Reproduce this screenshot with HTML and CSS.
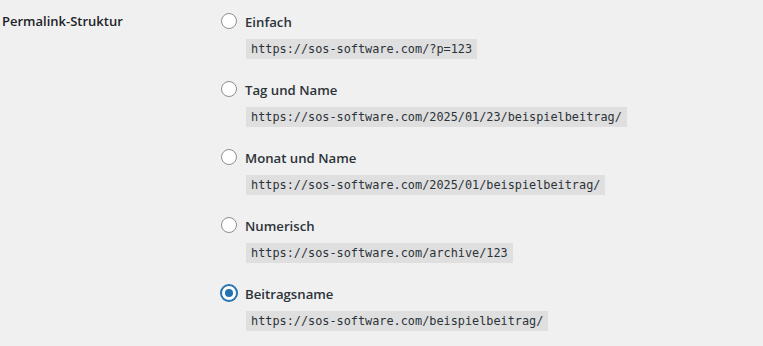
FILE: index.html
```html
<!DOCTYPE html>
<html lang="de">
  <head>
    <meta charset="utf-8" />
    <title>Permalink-Einstellungen</title>
    <link rel="stylesheet" href="styles.css">
  </head>

  <body>
    <main class="form-row">
      <div class="row-label">Permalink-Struktur</div>
      <fieldset class="options">
        <div class="option">
          <label class="choice">
            <input type="radio" name="selection" value="" />
            <span>Einfach</span>
          </label>
          <code>https://sos-software.com/?p=123</code>
        </div>
        <div class="option">
          <label class="choice">
            <input type="radio" name="selection" value="day" />
            <span>Tag und Name</span>
          </label>
          <code>https://sos-software.com/2025/01/23/beispielbeitrag/</code>
        </div>
        <div class="option">
          <label class="choice">
            <input type="radio" name="selection" value="month" />
            <span>Monat und Name</span>
          </label>
          <code>https://sos-software.com/2025/01/beispielbeitrag/</code>
        </div>
        <div class="option">
          <label class="choice">
            <input type="radio" name="selection" value="numeric" />
            <span>Numerisch</span>
          </label>
          <code>https://sos-software.com/archive/123</code>
        </div>
        <div class="option">
          <label class="choice">
            <input type="radio" name="selection" value="post" checked />
            <span>Beitragsname</span>
          </label>
          <code>https://sos-software.com/beispielbeitrag/</code>
        </div>
      </fieldset>
    </main>
  </body>
</html>
```

FILE: styles.css
```css
html,
body {
  margin: 0;
  background: #f0f0f1;
  color: #1d2327;
  font-family: 'Open Sans', 'Noto Sans', arial, sans-serif;
  font-size: 13px;
}

.form-row {
  display: grid;
  grid-template-columns: 221px 1fr;
}

.row-label {
  padding: 11px 0 0 2px;
  font-weight: 600;
  line-height: 20px;
}

.options {
  margin: 0;
  padding: 13px 0 0;
  border: 0;
  display: flex;
  flex-direction: column;
  gap: 22px;
}

.option {
  display: flex;
  flex-direction: column;
  align-items: flex-start;
  gap: 10px;
}

.choice {
  display: flex;
  align-items: center;
  gap: 8px;
  height: 16px;
  font-weight: 600;
  font-size: 13.2px;
  color: #2c3338;
}

.choice span {
  position: relative;
  top: 1px;
}

.choice input {
  appearance: none;
  margin: 0;
  width: 16px;
  height: 16px;
  border: 1px solid #8c8f94;
  border-radius: 50%;
  background: #fff;
  display: flex;
  align-items: center;
  justify-content: center;
}

.choice input:checked {
  border-color: #2271b1;
  box-shadow: 0 0 0 1px #2271b1;
}

.choice input:checked::before {
  content: '';
  width: 8px;
  height: 8px;
  border-radius: 50%;
  background: #2271b1;
}

code {
  margin-left: 25px;
  padding: 0 5px;
  height: 20px;
  line-height: 20px;
  background: #dfdfe0;
  color: #2c3338;
  font-family: 'DejaVu Sans Mono', 'Liberation Mono', monospace;
  font-size: 11.85px;
}
```
